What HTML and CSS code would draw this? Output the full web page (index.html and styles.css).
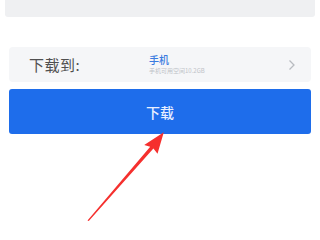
FILE: index.html
```html
<!DOCTYPE html>
<html>
<head>
<meta charset="utf-8">
<link rel="stylesheet" href="styles.css">
</head>
<body>
<div class="page">
  <div class="top-card"></div>
  <div class="target-row">
    <span class="label">下载到:</span>
    <div class="dest">
      <div class="dest-name">手机</div>
      <div class="dest-sub">手机可用空间10.2GB</div>
    </div>
    <svg class="chev" width="8" height="12" viewBox="0 0 8 12"><path d="M1.5 1.5 L6 6 L1.5 10.5" fill="none" stroke="#b8bbc0" stroke-width="1.3"/></svg>
  </div>
  <div class="btn">下载</div>
</div>
<svg class="arrow" width="320" height="240" viewBox="0 0 320 240">
  <polygon fill="#f5302e" points="87.5,220.5 150.2,146.8 144.2,145 163.8,132.2 157.5,153.8 153.4,148.6 88.8,221"/>
</svg>
</body>
</html>
```
FILE: styles.css
```css
html, body {
  margin: 0;
  padding: 0;
  background: #ffffff;
}
body {
  width: 320px;
  height: 240px;
  position: relative;
  overflow: hidden;
  font-family: "Noto Sans CJK SC", "Noto Sans", sans-serif;
}
.page {
  display: flex;
  flex-direction: column;
}
.top-card {
  margin: 0 5px;
  height: 17px;
  background: #eff0f2;
  border-radius: 0 0 3px 3px;
}
.target-row {
  margin: 30px 9px 0;
  height: 35px;
  background: #f5f6f8;
  border-radius: 4px;
  display: flex;
  align-items: center;
  padding: 0 15px 0 20px;
}
.label {
  font-size: 15px;
  color: #505050;
  width: 120px;
  letter-spacing: 0.5px;
}
.dest {
  flex: 1;
  display: flex;
  flex-direction: column;
  margin-top: -2px;
}
.dest-name {
  font-size: 10px;
  color: #3a7be0;
  line-height: 13px;
  font-weight: 500;
}
.dest-sub {
  font-size: 6px;
  color: #c0c3c8;
  line-height: 9px;
}
.chev {
  display: block;
}
.btn {
  margin: 7px 9px 0;
  height: 45px;
  background: #1e6deb;
  border-radius: 3px;
  color: #e8efff;
  font-size: 14px;
  font-weight: 500;
  display: flex;
  align-items: center;
  justify-content: center;
}
.arrow {
  position: absolute;
  left: 0;
  top: 0;
}
```
